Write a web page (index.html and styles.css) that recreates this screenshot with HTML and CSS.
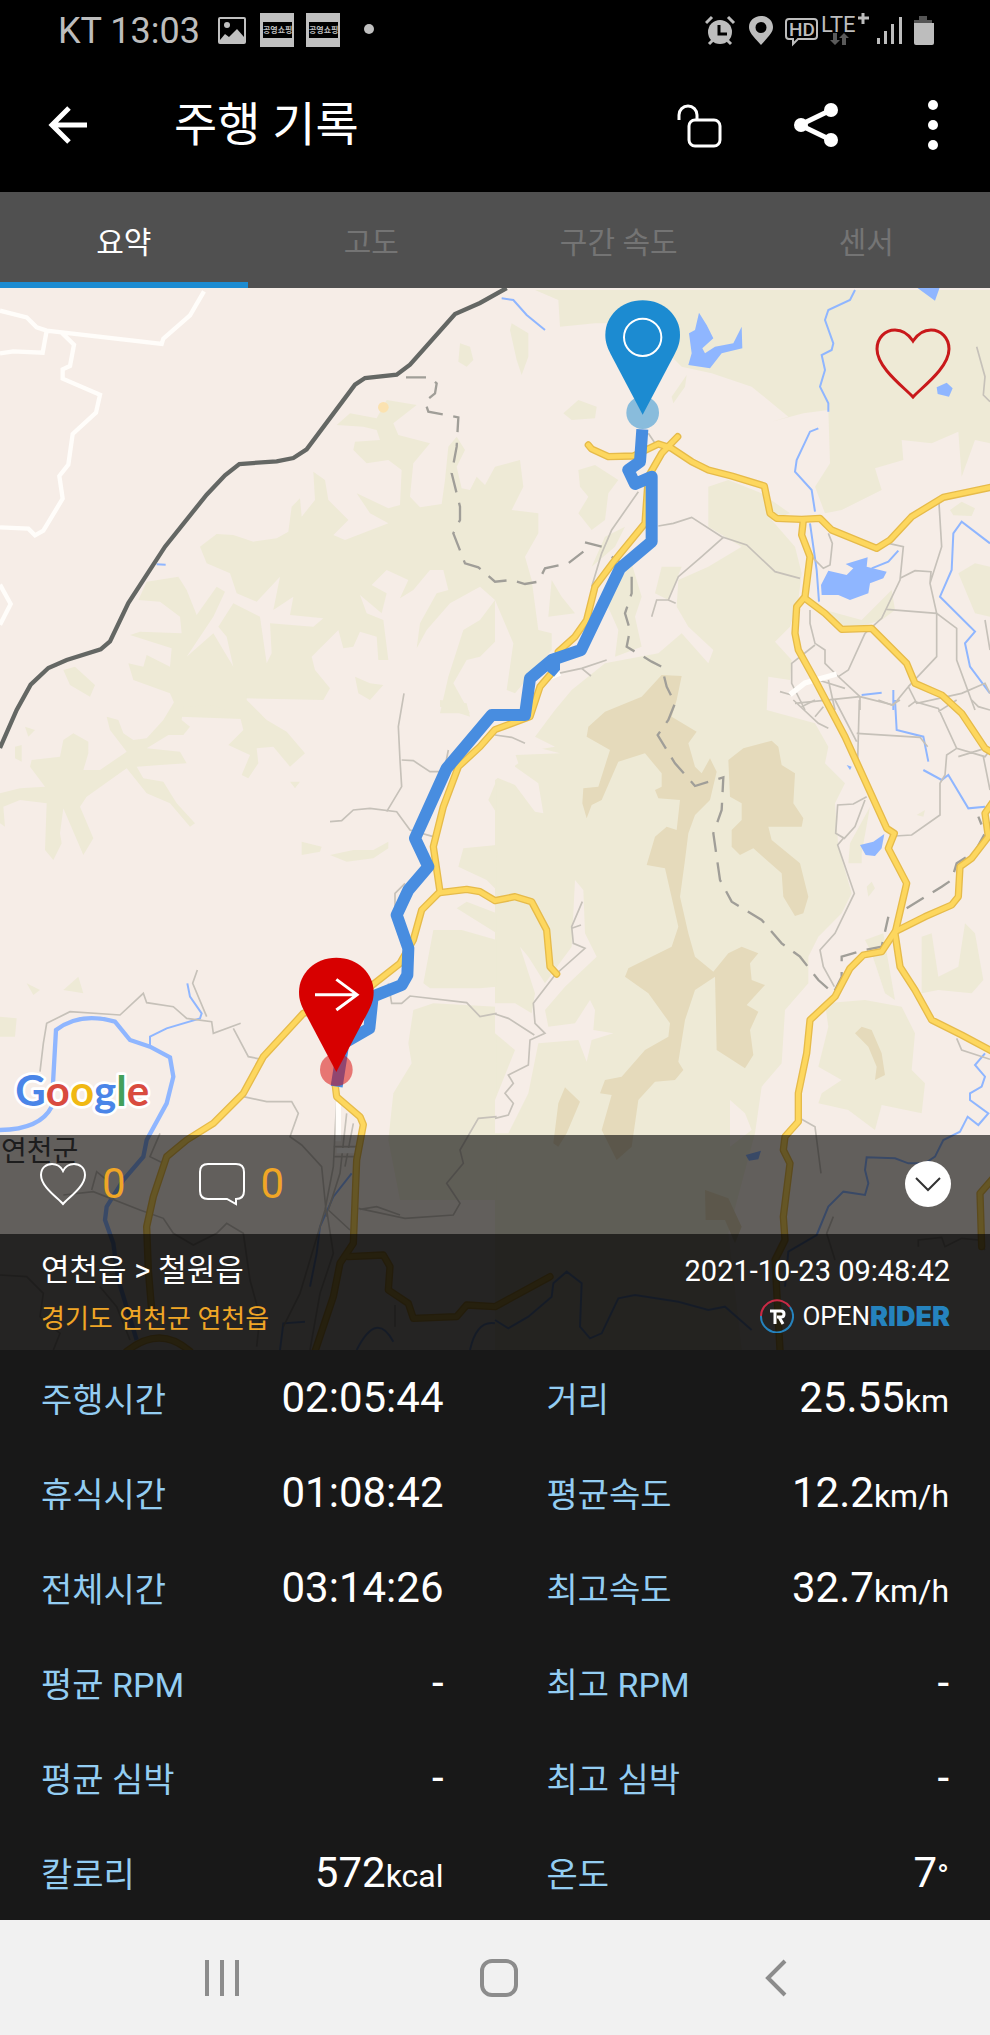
FILE: index.html
```html
<!DOCTYPE html>
<html lang="ko">
<head>
  <meta charset="UTF-8">
  <meta name="viewport" content="width=device-width, initial-scale=1.0">
  <title>주행 기록</title>
  <link rel="stylesheet" href="styles.css">
</head>
<body>
  <div class="status-bar">
    <span class="carrier">KT 13:03</span>
    <svg class="notices" width="156" height="36" viewBox="0 0 156 36">
      <path fill="#c0c0c0" fill-rule="evenodd" d="M2 4h24q2 0 2 2v23q0 2-2 2H2q-2 0-2-2V6q0-2 2-2zm0 2v21l5-6 4 3 8-8 7 8V6z"/>
      <circle cx="9" cy="12" r="3" fill="#c0c0c0"/>
      <path fill="#c0c0c0" d="M42 0h34v34H42zM88 0h34v34H88z"/>
      <path d="M45 9h29v16H45zM91 9h29v16H91z"/>
      <text class="tiny" x="45" y="20">공영쇼핑</text>
      <text class="tiny" x="91" y="20">공영쇼핑</text>
      <circle cx="151" cy="16" r="5" fill="#c0c0c0"/>
    </svg>
    <svg class="signals" width="230" height="36" viewBox="0 0 230 36" fill="#bdbdbd">
      <circle cx="15" cy="19" r="12"/>
      <path d="M1 10l6-6M29 10l-6-6M4 31l4-4M26 31l-4-4" stroke="#bdbdbd" stroke-width="3"/>
      <path d="M14 12v9h8" fill="none" stroke="#000" stroke-width="3"/>
      <path fill-rule="evenodd" d="M56 3c7 0 12 5 12 11 0 5-3 8-12 18-9-10-12-13-12-18C44 8 49 3 56 3zm0 6a5 5 0 1 0 0 11 5 5 0 0 0 0-11z"/>
      <path d="M84 6h25q3 0 3 3v14q0 3-3 3H93l-5 5v-5h-4q-3 0-3-3V9q0-3 3-3z" fill="none" stroke="#bdbdbd" stroke-width="2"/>
      <text class="hd" x="84" y="23">HD</text>
      <text class="lte" x="116" y="19">LTE</text>
      <path d="M153 5h11M158 0v11" stroke="#bdbdbd" stroke-width="3"/>
      <path d="M128 20h4v7h3l-5 5-5-5h3zM137 32h4v-7h3l-5-5-5 5h3z" fill="#5a5a5a"/>
      <path d="M172 25h3v6h-3zM179 18h3v13h-3zM186 11h3v20h-3zM194 4h3v27h-3z"/>
      <path d="M214 3h8v4h5v3h-18V7h5z" fill="#555"/>
      <path d="M209 10h20v20q0 2-2 2h-16q-2 0-2-2z"/>
    </svg>
  </div>

  <header class="app-bar">
    <button class="icon-btn" aria-label="뒤로">
      <svg width="40" height="40" viewBox="0 0 40 40" fill="none" stroke="#fff" stroke-width="5"><path d="M39 20H5M21 3L4 20l17 17"/></svg>
    </button>
    <h1>주행 기록</h1>
    <div class="actions">
      <button class="icon-btn" aria-label="잠금">
        <svg width="46" height="46" viewBox="0 0 46 46" fill="none" stroke="#fff" stroke-width="3"><rect x="12" y="18" width="31" height="26" rx="6"/><path d="M2 18v-5a9 9 0 0 1 18 0v5"/></svg>
      </button>
      <button class="icon-btn" aria-label="공유">
        <svg width="46" height="46" viewBox="0 0 46 46" fill="#fff"><path d="M38 8L7 23l31 15" fill="none" stroke="#fff" stroke-width="5"/><circle cx="8" cy="23" r="7"/><circle cx="38" cy="8" r="7"/><circle cx="38" cy="38" r="7"/></svg>
      </button>
      <button class="icon-btn" aria-label="더보기">
        <svg width="12" height="52" viewBox="0 0 12 52" fill="#fff"><circle cx="6" cy="6" r="5"/><circle cx="6" cy="26" r="5"/><circle cx="6" cy="46" r="5"/></svg>
      </button>
    </div>
  </header>

  <nav class="tabs">
    <button class="tab active">요약</button>
    <button class="tab">고도</button>
    <button class="tab">구간 속도</button>
    <button class="tab">센서</button>
  </nav>

  <main>
    <section class="map-panel">
      <svg class="map" viewBox="0 0 2970 3186">
        <rect width="2970" height="3186" fill="#f6ede7"/>

        <!-- woodland -->
        <g fill="#eeead6">
          <g transform="translate(0 -24)">
            <path d="M600 800L650 762 700 765 760 785 830 775 865 755 875 680 900 655 905 710 945 660 940 575 975 600 985 660 1045 720 1000 765 1035 780 1165 730 1110 700 1070 640 1165 685 1200 675 1205 570 1165 540 1100 550 1060 510 1065 485 1140 480 1130 450 1090 440 1010 435 1050 400 1130 415 1160 360 1250 375 1180 430 1195 465 1290 490 1240 550 1230 650 1260 682 1325 672 1335 600 1345 500 1370 470 1395 510 1370 560 1385 625 1410 630 1430 590 1455 615 1485 560 1560 540 1570 620 1535 690 1615 700 1615 760 1575 830 1595 900 1615 1050 1655 1060 1655 1110 1545 1240 1520 1230 1540 1090 1485 960 1440 920 1350 970 1280 1050 1250 1105 1260 1030 1310 940 1345 930 1330 870 1290 870 1240 930 1200 955 1225 900 1160 870 1115 915 1160 940 1145 1000 1080 945 1100 1000 1150 1020 1165 1140 1135 1140 1130 1070 1080 1055 1060 1100 1030 1105 1015 1050 970 1095 935 1130 945 1170 990 1225 970 1260 730 1255 720 1275 800 1320 540 1310 510 1240 400 1200 385 1150 430 1160 440 1125 510 1160 515 1105 390 1065 420 1055 545 1060 540 1010 480 965 415 960 440 905 535 890 560 930 590 1005 650 920 675 935 640 1010 560 1130 640 1060 700 1160 680 1070 655 1040 700 970 780 1010 800 1150 815 1120 810 1030 940 1040 970 1015 870 1005 880 950 820 990 840 890 770 965 710 940 690 880 620 850Z"/>
            <path d="M1380 190l30 10 10 40-20 20-25-15zM190 1170L225 1160 285 1215 270 1250 210 1215ZM1065 1190L1110 1210 1150 1215 1110 1260 1075 1240ZM1485 1085L1440 1130 1400 1140 1360 1210 1410 1300H1320L1345 1190 1390 1050 1440 1020 1485 960Z"/>
          </g>
          <g transform="translate(1485 -24)">
            <path d="M120 30H1485V490L1440 480 1400 590 1390 455 1310 490 1220 480 1225 540 1140 565 1160 630 1040 690 990 700 960 620 1005 550 1000 390 925 400 830 425 880 410 770 320 650 280 560 260 500 200 400 130 300 130 195 140 190 60Z"/>
            <path d="M640 620L700 600 800 640 885 700 830 720 900 800 920 880 910 960 885 1040 840 1085 890 1140 885 1200 820 1190 815 1290 960 1330 1000 1400 990 1450 1050 1510 1020 1570 1030 1700 1070 1840 1040 1900 970 1970 940 2030 940 2110 870 2190 860 2350 800 2420 780 2560 700 2860 740 3210 0 3210 0 1500 70 1450 60 1420 180 1400 120 1370 180 1290 230 1230 330 1150 490 1120 560 1060 640 1150 655 1110 580 1040 545 980 550 900 640 860 740 800 640 740Z"/>
            <path d="M50 130L100 160 100 230 80 285 65 240 45 150ZM205 400L250 360 305 380 300 415 230 420ZM530 350L575 285 570 320 535 370ZM250 570L300 555 370 600 340 640 330 720 290 750 250 700 280 650 255 620ZM170 900L200 950 240 1000 160 1010ZM330 770L390 740 360 800 290 860ZM500 860L560 860 520 960 480 940ZM330 960L410 850 440 950 420 1010 440 1100 360 1130 370 1050ZM1365 690L1400 665 1440 685 1430 708 1375 706ZM1390 880L1440 850 1485 860V1010L1440 1000ZM990 990L1100 1020 1190 930 1200 990 1160 1020 1060 1050Z"/>
          </g>
          <g transform="translate(0 1236)">
            <path d="M320 50L355 60 370 100 400 120 440 115 490 60 520 10 540 -20 740 -20 740 0 800 60 860 95 915 160 870 200 820 140 770 145 775 190 745 235 725 225 750 165 685 135 730 90 720 50 640 15 550 20 545 60 570 80 550 105 505 105 440 145 540 155 560 190 480 195 410 200 430 235 490 245 530 310 585 370 570 380 510 310 440 280 380 205 260 290 240 320 280 415 250 465 190 325 180 400 185 430 160 480 135 450 140 310 60 300 10 320 15 380 0 370V280L60 265 135 260 90 200 95 180 180 170 190 120 220 100 265 125 265 160 250 210 300 210 380 155 330 90Z"/>
            <path d="M905 425l60 15-5 15-55 10zM990 465L1060 450 1120 450 1165 425V445L1120 475 1040 485ZM1300 690L1385 690 1490 720V860L1440 865 1290 865 1270 850ZM1490 435L1390 445 1375 500 1460 540 1490 570ZM1400 605L1490 640V700L1370 625ZM1490 920L1300 910 1240 930 1225 1030 1235 1090 1180 1180 1165 1320 1200 1500H1490ZM190 870L235 830 250 880ZM0 950L50 955 45 1010 0 1010ZM1320 0l80 10 10 40-90-30zM1490 240l-25 60 25 40zM870 245l30 0-15 20zM75 80l30 10-20 20zM45 140l20-5v50l-20-10zM80 850l40 20-20 15z"/>
          </g>
          <g transform="translate(1485 1236)">
            <path d="M990 910L1110 900 1220 920 1260 1000 1250 1110 1290 1150 1280 1240 1160 1215 1140 1290 1060 1230 970 1210 980 1180 1040 1140 970 1100 1000 980ZM1280 710L1310 700 1330 830 1390 800 1410 670 1440 700 1465 840 1430 880 1330 870 1280 880ZM1110 720L1165 700 1200 900 1170 880 1130 760ZM1065 430L1125 320 1100 460 1100 490 1060 490ZM1115 560l15-15 10 20-20 25zM1265 345l25-15-5 20z"/>
          </g>
        </g>

        <!-- open valleys inside the woodland -->
        <g fill="#f6ede7" transform="translate(1485 1236)">
          <path d="M0 110L195 160 60 165 60 200 130 250 145 340 120 335 60 255 0 230ZM240 540L265 570 270 700 305 770 210 860 150 930 160 980 240 970 285 900 300 930 295 990 355 1000 290 1020 275 1085 250 1020 130 1030 100 1180 40 1300 0 1300 0 1200 60 1050 0 1000V910L60 910 110 940 120 880 75 740 100 770 150 850 230 740ZM705 1200L750 1240 770 1290 705 1340Z"/>
        </g>

        <!-- high ground -->
        <g fill="#e5dabb">
          <g transform="translate(1485 1236)">
            <path d="M330 35L440 -10 500 -75 560 -72 545 0 530 50 605 95 580 130 600 200 620 220 645 175 665 215 645 300 600 345 580 400 570 480 555 590 580 700 600 770 655 815 700 760 740 740 790 760 765 790 770 840 810 855 755 915 790 935 765 990 775 1065 750 1105 665 1050 660 830 600 870 570 960 550 1085 565 1110 540 1140 480 1145 430 1200 410 1340 365 1380 320 1290 350 1185 315 1180 330 1140 380 1130 450 1050 520 1010 525 970 460 880 390 830 400 805 530 740 550 680 510 505 455 495 480 410 515 380 545 390 555 300 490 295 480 270 500 260 500 220 450 160 370 185 320 300 290 315 275 355 262 310 265 265 310 260 345 150 275 110 280 80Z"/>
            <path d="M700 180L745 145 830 122 850 140 860 195 900 220 895 310 925 355 920 380 820 380 830 420 915 490 940 590 925 640 900 648 865 590 860 520 775 445 735 465 710 440 710 390 740 360 740 310 705 290ZM1080 1000L1100 980 1130 990 1160 1060 1170 1125 1140 1140 1145 1100 1120 1040ZM190 1210L210 1162 255 1205 215 1300 190 1340 175 1330ZM630 1470L700 1495 740 1580 720 1630 690 1560 632 1560Z"/>
          </g>
        </g>
        <circle cx="1150" cy="358" r="16" fill="#fbe2b0"/>

        <!-- lakes -->
        <g fill="#8fb6ff" transform="translate(1485 -24)">
          <path d="M582 160L600 150 612 98 635 135 655 175 622 205 630 220 660 200 715 190 740 140 742 205 680 220 645 265 580 255 590 220ZM1262 20H1335L1320 62ZM1325 322L1355 308 1373 325 1362 350 1328 342ZM978 915L1000 872 1055 885 1075 865 1052 852 1118 832 1115 860 1175 875 1165 895 1125 910 1120 940 1065 960 1030 945 980 945ZM1095 1695L1135 1685 1168 1662 1160 1705 1140 1728 1112 1725ZM1055 1455l15 5-5 10zM752 2625L798 2612 790 2638 762 2642Z"/>
        </g>

        <!-- rivers -->
        <g class="river">
          <g transform="translate(1485 -24)">
            <path d="M1080 30L1065 60 1000 90 990 120 1015 190 1010 210 980 225 990 270 975 320 1000 370V395M970 445L945 455 905 540 900 575 950 630 960 695M945 730L965 870 972 965M20 55L55 60 95 105 150 150M1485 790L1400 725 1375 760 1370 870 1335 950 1440 1055 1410 1090 1425 1160 1485 1240M1210 812L1180 845 1130 865M1100 1245L1160 1238M1195 1230V1290"/>
          </g>
          <g transform="translate(1485 1236)">
            <path d="M1200 0L1205 90 1285 110 1300 185M1285 210L1340 240 1360 225 1420 325 1470 320M1470 1060L1440 1095 1470 1130 1460 1160 1425 1180V1200L1480 1240 1450 1275 1418 1250 1395 1295 1345 1320 1320 1370 1290 1390 1240 1390 1200 1375 1115 1372 1110 1410 1120 1450 1110 1485 1045 1475 1000 1520 965 1605 880 1655 870 1760M0 1860L40 1885 100 1850 170 1790 175 1750 215 1715 260 1750 255 1880 285 1915 320 1900 370 1795 420 1785 550 1805 640 1830 690 1820 770 1890"/>
          </g>
          <g transform="translate(0 1236)">
            <path d="M450 1040V1010L500 985 600 955 605 940 570 890 562 850M1055 1420L1000 1490 960 1580 950 1660 930 1760M1070 1950Q1130 1830 1180 1925M1410 1950Q1430 1860 1485 1870M840 1950L850 1870 915 1865"/>
            <path class="wide" d="M-10 1290Q120 1290 155 1220L168 990Q240 935 345 965L390 1020 450 1040 510 1072 520 1130 500 1210 440 1320 430 1370 370 1440 320 1520 315 1560 340 1630 355 1740 410 1920"/>
          </g>
          <path d="M470 829L497 830"/>
        </g>

        <!-- minor roads -->
        <g class="lane">
          <g transform="translate(1485 -24)">
            <path d="M430 635L350 750 320 820 290 920M460 460L480 490M490 738L535 730 590 712 680 770 755 795 840 875 915 895M685 772L620 830 550 890 520 960 485 960 470 1010M520 960L542 970M190 1180L260 1165 335 1140M260 1165L288 1188M945 990V1030L960 1090 990 1110V1150L1025 1185M1110 1060L1060 1170 1030 1190M1332 670L1340 800 1305 910 1325 1000V1130L1240 1220M1180 790L1225 800 1215 900 1160 1015 1110 1060M1215 895L1260 872 1308 875 1305 910M1175 988L1325 1000 1385 1045V1140L1440 1290M960 1095L890 1150V1210L930 1290M1000 760L1012 790 1005 855 985 865 950 830M1025 1185L1095 1250 1195 1275 1240 1220 1265 1270 1400 1240 1470 1210 1485 1240M1095 1250V1290M900 1270L1095 1250M1445 200L1470 290 1465 345 1485 365M855 1235L890 1245M970 1200L1050 1225M1000 1200L1020 1290M1470 1020L1485 1110"/>
          </g>
          <g transform="translate(1485 1236)">
            <path d="M895 0L970 70 1000 85M920 20L960 0M960 50L985 20M1085 100L1275 112 1298 140M1093 0L1088 180M1020 0L1085 125M1150 0L1190 15 1215 0M1240 20L1260 5 1330 25 1385 145 1470 170 1485 150M1330 35L1385 0M1430 0L1450 20 1485 30M1390 170L1470 145M1465 170L1485 270M1385 145L1355 165 1350 225 1335 250V345L1250 405 1200 408M1115 290L1075 312 1028 315 1022 400 1048 415 1080 380 1110 300M1045 415L1028 435 1078 580 1020 700 975 750 985 800 1018 860M262 605L230 680 235 730 270 745 180 825 115 910 120 970 150 1000 105 1020 100 1095 40 1125 55 1150 30 1180 55 1210 40 1245 0 1255M230 685L258 675M0 942L40 955 118 1005M0 105L50 112 90 130M1385 1015L1400 1050 1485 1078M920 1258L960 1280 978 1420M1015 1550L995 1600 1020 1680M1270 1640V1620L1340 1612 1350 1640 1400 1615 1450 1620 1470 1650"/>
          </g>
          <g transform="translate(0 1236)">
            <path d="M1212 -20L1195 80 1200 180 1205 260 1160 335M1205 180L1240 182 1290 215 1320 215M1345 150L1335 200M990 365L1025 362 1060 330 1110 325 1190 335 1230 390 1300 410M120 1115L130 1030 140 970 210 935 360 945 430 880 440 908 520 920 560 955 635 965 640 1000 722 970M700 985L745 1070 785 1078M592 810L578 850 620 950M730 1190L800 1205 875 1205 895 1240 870 1310 905 1335 965 1400 980 1550M1165 850L1175 910 1205 910 1230 888 1400 908 1440 950 1490 940M1215 550L1185 580V630M1490 1250L1435 1255 1380 1350 1390 1390 1340 1450 1380 1510 1360 1545 1215 1555 1075 1525M1080 1528L1130 1520 1200 1545M480 1300L450 1370 490 1390M190 1485L280 1475 420 1530 490 1555 520 1600 580 1635 650 1600 680 1570 730 1600 750 1740 780 1850 770 1940M275 1470L290 1415 320 1440M1010 1200L1000 1400 975 1530M1040 1240L1020 1420 985 1530M1060 1270L1035 1400M1000 1340H1070M1000 1370H1070M980 1530L1000 1660 960 1780 930 1950M975 1530L900 1780 850 1880M985 1530L1050 1590M0 1725L80 1730 130 1780 120 1850 180 1900 160 1950M300 1760L350 1820 390 1920M1185 1815V1880"/>
          </g>
        </g>

        <!-- northern roads -->
        <g fill="none" stroke="#fffdfa" stroke-width="13">
          <path d="M0 68L80 88 110 118 140 128 485 168 490 152 570 82 612 10M140 128L128 194 40 190 0 196M185 134L222 170 210 234 188 244V272L300 320 288 374 218 438 205 530 178 564 188 632 130 728 105 742 85 722 0 718M0 890L32 948 0 1010"/>
          <path d="M2370 1220L2415 1185 2510 1158M1650 1168L1680 1155M1015 2440V2560M1010 2588H1070" stroke-width="16"/>
        </g>

        <!-- border line -->
        <path d="M1520 0L1440 45 1365 78 1230 230 1190 260 1095 270 1065 290 920 484 880 510 830 520 718 528 675 562 620 620 495 776 385 945 330 1060 302 1084 200 1116 145 1140 92 1190 50 1266 0 1380" fill="none" stroke="#646764" stroke-width="13"/>
        <g class="district">
          <path d="M1218 268H1290L1310 286 1305 316 1275 341 1285 371 1375 388 1370 476 1355 556 1380 656V696L1360 736 1395 826 1435 838 1485 881 1535 876 1575 888 1615 881 1635 841 1705 826 1750 791M1755 763L1805 776M1835 806L1895 846V916L1875 976 1890 1026 1880 1076 1955 1121 1985 1136 2000 1196 2025 1246 2005 1296 1973 1341 2025 1426 2085 1494 2170 1468 2165 1566 2140 1636 2160 1776 2195 1841 2285 1896 2345 1966 2400 2006 2455 2076 2500 2116 2525 2066V2006L2595 1986 2645 1976 2665 1886M2720 1861L2825 1796 2855 1776 2870 1726 2925 1691 2955 1636 2935 1586"/>
        </g>

        <!-- national roads: casing first, then fill -->
        <defs>
          <g id="roads">
            <path d="M1765 471L1775 483 1825 506 1900 504 1975 468 2015 481 2075 521 2125 546 2195 564 2293 594 2310 676 2330 691 2405 694 2460 691 2495 726 2630 781 2670 756 2735 686 2830 628 2980 596"/>
            <path d="M2033 446L1985 496 1945 566 1935 706 1845 816 1785 896 1760 996 1725 1046 1675 1091M1650 1161L1620 1196 1590 1286 1485 1325 1440 1376 1375 1436 1330 1556 1300 1676 1320 1811 1265 1866 1240 1956 1200 2026 1060 2136 910 2176 790 2306 730 2416 640 2506 560 2556 500 2606 460 2726 440 2816 445 2946 455 3066"/>
            <path d="M1320 1814L1400 1804 1440 1811 1485 1838 1545 1826 1595 1841 1640 1926 1650 2036 1670 2058"/>
            <path d="M2410 696L2405 741 2430 806 2415 926 2390 956 2385 1036 2395 1086 2445 1176 2535 1346 2660 1621 2683 1636 2665 1681 2720 1786 2685 1936 2700 2036 2745 2106 2795 2196 2885 2241 2980 2292"/>
            <path d="M2415 931L2475 976 2525 1024 2615 1021 2720 1126 2745 1186 2825 1221 2885 1276 2955 1381 2980 1396"/>
            <path d="M2980 1540L2955 1576 2965 1646 2915 1711 2880 1736 2875 1826 2855 1851 2775 1886 2685 1931 2645 1991 2590 2001 2550 2041 2505 2126 2430 2196 2420 2296 2395 2416V2501L2355 2546 2350 2586 2370 2626 2350 2786 2355 2856 2325 2916 2340 3186"/>
            <path d="M1005 2386L1010 2426 1080 2486 1090 2510 1070 2616 1060 2866 1020 2926 1000 3026 945 3190M1045 2906L1150 2901 1170 2936 1165 3006 1225 3046 1240 3091 1370 3086 1400 3051 1485 3056 1650 2966M380 3190Q480 3110 570 3190M2980 2670L2940 2716 2945 2876"/>
          </g>
        </defs>
        <use href="#roads" class="road-casing"/>
        <use href="#roads" class="road-fill"/>

        <!-- ridden track -->
        <path d="M1927 424L1920 521 1885 546 1905 588 1955 566V761L1860 841 1743 1086 1655 1116 1590 1171 1575 1281H1475L1340 1441 1245 1651 1285 1736 1225 1806 1190 1881 1225 1981 1222 2061 1205 2091 1118 2126 1108 2221 1030 2266 1010 2396" fill="none" stroke="#488de0" stroke-width="36" stroke-linejoin="round"/>
        <path d="M1630 1120L1680 1110V1145L1662 1166 1640 1148Z" fill="#488de0"/>

        <text class="place" x="3" y="2619">연천군</text>

        <g transform="translate(1928 380)">
          <circle cy="-6" r="49" fill="#1c8bd1" fill-opacity=".5"/>
          <path d="M0 0L-95-180C-105-200-112-215-112-240-112-295-65-343 0-343S112-295 112-240C112-215 105-200 95-180Z" fill="#1c8bd1"/>
          <circle cy="-232" r="56" fill="none" stroke="#fff" stroke-width="6"/>
        </g>
        <g transform="translate(1009 2352)">
          <circle cy="-7" r="49" fill="#d70000" fill-opacity=".5"/>
          <path d="M0 0L-95-180C-105-200-112-215-112-240-112-295-65-343 0-343S112-295 112-240C112-215 105-200 95-180Z" fill="#d70000"/>
          <path d="M-64-232H62M0-278L62-232 0-186" fill="none" stroke="#fff" stroke-width="9"/>
        </g>

        <text class="google" x="46" y="2454"><tspan class="g-blue">G</tspan><tspan class="g-red">o</tspan><tspan class="g-yellow">o</tspan><tspan class="g-blue">g</tspan><tspan class="g-green">l</tspan><tspan class="g-red">e</tspan></text>
      </svg>

      <button class="icon-btn favorite" aria-label="즐겨찾기">
        <svg width="76" height="72" viewBox="0 0 76 72" fill="none" stroke="#c9191b" stroke-width="3"><path d="M38 69C30 60 2 40 2 21 2 10 10 2 20 2 29 2 34 7 38 13 42 7 47 2 56 2 66 2 74 10 74 21 74 40 46 60 38 69Z"/></svg>
      </button>

      <div class="map-overlay">
        <div class="social">
          <button class="count-btn" aria-label="좋아요">
            <svg width="48" height="44" viewBox="0 0 48 44" fill="none" stroke="#fff" stroke-width="2"><path d="M24 42C19 36 2 25 2 13 2 6 7 2 13 2 18 2 22 5 24 9 26 5 30 2 35 2 41 2 46 6 46 13 46 25 29 36 24 42Z"/></svg>
            <span>0</span>
          </button>
          <button class="count-btn" aria-label="댓글">
            <svg width="48" height="44" viewBox="0 0 48 44" fill="none" stroke="#fff" stroke-width="2"><path d="M10 2H38Q46 2 46 10V29Q46 37 38 37V42L29 37H10Q2 37 2 29V10Q2 2 10 2Z"/></svg>
            <span>0</span>
          </button>
          <button class="icon-btn collapse" aria-label="접기">
            <svg width="46" height="46" viewBox="0 0 46 46"><circle cx="23" cy="23" r="23" fill="#fff"/><path d="M11 17l12 12 12-12" fill="none" stroke="#333" stroke-width="2"/></svg>
          </button>
        </div>
        <div class="ride-info">
          <div class="route">
            <h2>연천읍 &gt; 철원읍</h2>
            <p class="region">경기도 연천군 연천읍</p>
          </div>
          <div class="meta">
            <time>2021-10-23 09:48:42</time>
            <div class="brand">
              <svg width="34" height="34" viewBox="0 0 34 34" fill="none">
                <path d="M1 17a16 16 0 0 1 29-9" stroke="#c92a45" stroke-width="2"/>
                <path d="M30 8A16 16 0 1 1 1 17" stroke="#2583be" stroke-width="2"/>
                <path d="M10 12h11q3 0 3 3t-3 3h-4M15 12v13M19 18l4 7" stroke="#fff" stroke-width="3"/>
              </svg>
              <span class="open">OPEN</span><span class="rider">RIDER</span>
            </div>
          </div>
        </div>
      </div>
    </section>

    <dl class="stats">
      <div class="stat"><dt>주행시간</dt><dd>02:05:44</dd></div>
      <div class="stat"><dt>거리</dt><dd>25.55<small>km</small></dd></div>
      <div class="stat"><dt>휴식시간</dt><dd>01:08:42</dd></div>
      <div class="stat"><dt>평균속도</dt><dd>12.2<small>km/h</small></dd></div>
      <div class="stat"><dt>전체시간</dt><dd>03:14:26</dd></div>
      <div class="stat"><dt>최고속도</dt><dd>32.7<small>km/h</small></dd></div>
      <div class="stat"><dt>평균 RPM</dt><dd>-</dd></div>
      <div class="stat"><dt>최고 RPM</dt><dd>-</dd></div>
      <div class="stat"><dt>평균 심박</dt><dd>-</dd></div>
      <div class="stat"><dt>최고 심박</dt><dd>-</dd></div>
      <div class="stat"><dt>칼로리</dt><dd>572<small>kcal</small></dd></div>
      <div class="stat"><dt>온도</dt><dd>7<small>°</small></dd></div>
    </dl>
  </main>

  <footer class="system-nav">
    <button class="icon-btn" aria-label="최근 앱">
      <svg width="36" height="38" viewBox="0 0 36 38" stroke="#8c8c8c" stroke-width="4"><path d="M3 1v36M18 1v36M33 1v36"/></svg>
    </button>
    <button class="icon-btn" aria-label="홈">
      <svg width="40" height="40" viewBox="0 0 40 40" fill="none" stroke="#8c8c8c" stroke-width="4"><rect x="3" y="3" width="34" height="34" rx="10"/></svg>
    </button>
    <button class="icon-btn" aria-label="이전">
      <svg width="22" height="38" viewBox="0 0 22 38" fill="none" stroke="#8c8c8c" stroke-width="4"><path d="M20 2L3 19l17 17"/></svg>
    </button>
  </footer>
</body>
</html>
```
FILE: styles.css
```css
:root {
  --bar: #000;
  --tab-bg: #505050;
  --tab-text: #747474;
  --accent: #1c8bd1;
  --panel: #181818;
  --label: #93cdf2;
  --orange: #f0a626;
  --status: #bdbdbd;
  --side: 41px;
}

* {
  margin: 0;
  padding: 0;
  box-sizing: border-box;
}

body {
  background: var(--panel);
  color: #fff;
  font-family: Roboto, "Noto Sans CJK KR", sans-serif;
  min-height: 100vh;
  display: flex;
  flex-direction: column;
}

button {
  background: none;
  border: none;
  color: inherit;
  font: inherit;
  cursor: pointer;
}

svg {
  display: block;
}

.icon-btn {
  display: grid;
  place-items: center;
}

/* phone status bar */
.status-bar {
  height: 62px;
  padding: 0 55px 0 58px;
  background: var(--bar);
  display: flex;
  align-items: center;
}

.carrier {
  color: var(--status);
  font-size: 36px;
  line-height: 62px;
}

.notices {
  margin-left: 18px;
}

.signals {
  margin-left: auto;
}

.tiny {
  font-size: 8px;
  font-weight: 700;
  fill: #c0c0c0;
}

.hd {
  font-size: 19px;
  font-weight: 500;
}

.lte {
  font-size: 22px;
}

/* title bar */
.app-bar {
  height: 130px;
  padding: 0 51px 4px 48px;
  background: var(--bar);
  display: flex;
  align-items: center;
}

.app-bar h1 {
  margin-left: 86px;
  font-size: 47px;
  font-weight: 400;
  line-height: 64px;
}

.actions {
  margin-left: auto;
  display: flex;
  align-items: center;
}

.actions .icon-btn:nth-child(2) {
  margin: 0 88px 0 70px;
}

.tabs {
  height: 96px;
  background: var(--tab-bg);
  display: grid;
  grid-template-columns: repeat(4, 1fr);
}

.tab {
  color: var(--tab-text);
  font-size: 30px;
  border-top: 6px solid transparent;
  border-bottom: 6px solid transparent;
}

.tab.active {
  color: #fff;
  border-bottom-color: var(--accent);
}

/* map */
.map-panel {
  position: relative;
  display: grid;
}

.map {
  grid-area: 1 / 1;
  width: 100%;
  height: auto;
}

.map-overlay {
  grid-area: 1 / 1;
  align-self: end;
  position: relative;
}

.favorite {
  position: absolute;
  top: 40px;
  right: 39px;
}

.river {
  fill: none;
  stroke: #8fb6ff;
  stroke-width: 6;
}

.river .wide {
  stroke-width: 13;
}

.lane {
  fill: none;
  stroke: #c6c1b9;
  stroke-width: 5;
}

.district {
  fill: none;
  stroke: #a09e98;
  stroke-width: 7;
  stroke-dasharray: 60 32;
}

.road-casing,
.road-fill {
  fill: none;
  stroke-linecap: round;
  stroke-linejoin: round;
}

.road-casing {
  stroke: #e6bb4a;
  stroke-width: 22;
}

.road-fill {
  stroke: #fdd75e;
  stroke-width: 14;
}

.place {
  font-size: 84px;
  fill: #4a4a4a;
}

.google {
  font-family: Lato, sans-serif;
  font-size: 126px;
  font-weight: 700;
  stroke: #fff;
  stroke-width: 16;
  stroke-linejoin: round;
  paint-order: stroke;
}

.g-blue {
  fill: #4a85e8;
}

.g-red {
  fill: #d94b3f;
}

.g-yellow {
  fill: #f0b813;
}

.g-green {
  fill: #43a05b;
}

.social {
  height: 99px;
  padding: 0 39px 2px;
  background: rgba(0, 0, 0, 0.6);
  display: flex;
  align-items: center;
  gap: 72px;
}

.count-btn {
  display: flex;
  align-items: center;
  gap: 15px;
  color: var(--orange);
  font-size: 42px;
  line-height: 48px;
}

.collapse {
  margin-left: auto;
}

.ride-info {
  height: 116px;
  padding: 14px 40px 0 var(--side);
  background: rgba(0, 0, 0, 0.85);
  display: flex;
  justify-content: space-between;
}

.ride-info h2 {
  font-size: 31px;
  font-weight: 400;
  line-height: 46px;
}

.region {
  color: var(--orange);
  font-size: 26px;
  line-height: 50px;
}

.meta {
  text-align: right;
}

.meta time {
  display: block;
  font-size: 29px;
  line-height: 46px;
}

.brand {
  height: 44px;
  display: flex;
  align-items: center;
  justify-content: flex-end;
  font-size: 26px;
}

.brand svg {
  margin-right: 8px;
}

.brand .rider {
  color: #2583be;
  font-family: Inter, sans-serif;
  font-size: 27px;
  font-weight: 900;
}

/* ride figures */
.stats {
  padding: 0 var(--side);
  background: var(--panel);
  display: grid;
  grid-template-columns: 1fr 1fr;
  column-gap: 103px;
}

.stat {
  height: 95px;
  display: flex;
  align-items: center;
  justify-content: space-between;
}

.stat dt {
  color: var(--label);
  font-size: 34px;
}

.stat dd {
  font-size: 42px;
}

.stat small {
  font-size: 32px;
}

/* phone navigation */
.system-nav {
  flex: 1;
  min-height: 115px;
  padding: 0 76px 0 84px;
  background: #f1f1f1;
  display: grid;
  grid-template-columns: repeat(3, 1fr);
}
```
